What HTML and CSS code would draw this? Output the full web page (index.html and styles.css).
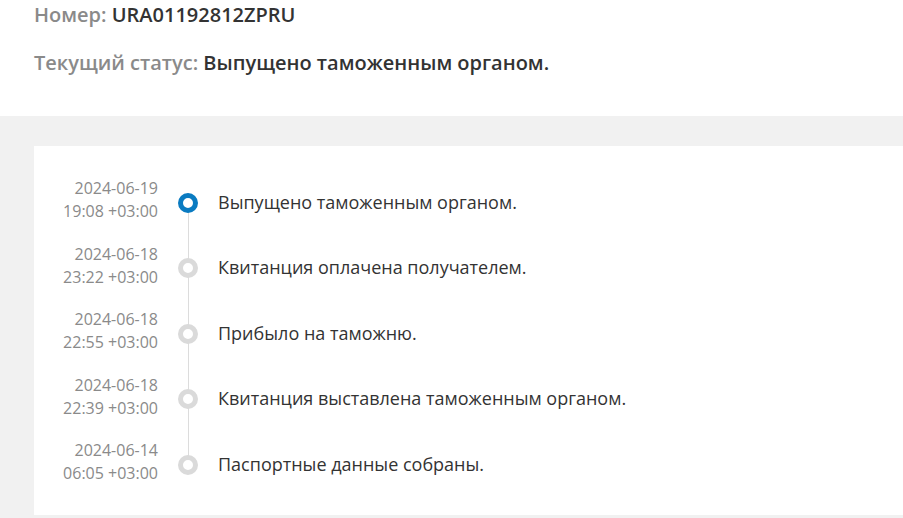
FILE: index.html
```
<!DOCTYPE html>
<html lang="ru">
<head>
  <meta charset="UTF-8">
  <meta name="viewport" content="width=device-width, initial-scale=1.0">
  <title>Статус отправления</title>
  <link rel="stylesheet" href="styles.css">
</head>
<body>
  <div id="info">
    <p><span class="label">Номер:</span> URA01192812ZPRU</p>
    <p><span class="label">Текущий статус:</span> Выпущено таможенным органом.</p>
  </div>
  <div id="history">
    <div class="card">
      <div class="row current">
        <div class="date">2024-06-19<br>19:08 +03:00</div>
        <div class="marker"><span class="dot"></span></div>
        <div class="event">Выпущено таможенным органом.</div>
      </div>
      <div class="row">
        <div class="date">2024-06-18<br>23:22 +03:00</div>
        <div class="marker"><span class="dot"></span></div>
        <div class="event">Квитанция оплачена получателем.</div>
      </div>
      <div class="row">
        <div class="date">2024-06-18<br>22:55 +03:00</div>
        <div class="marker"><span class="dot"></span></div>
        <div class="event">Прибыло на таможню.</div>
      </div>
      <div class="row">
        <div class="date">2024-06-18<br>22:39 +03:00</div>
        <div class="marker"><span class="dot"></span></div>
        <div class="event">Квитанция выставлена таможенным органом.</div>
      </div>
      <div class="row">
        <div class="date">2024-06-14<br>06:05 +03:00</div>
        <div class="marker"><span class="dot"></span></div>
        <div class="event">Паспортные данные собраны.</div>
      </div>
    </div>
  </div>
</body>
</html>
```

FILE: styles.css
```
body {
  font-family: 'Open Sans', sans-serif;
  margin: 0;
  padding: 0;
  background-color: #fff;
  color: #333;
}

#info {
  padding: 2px 34px 40px;
  font-size: 20px;
  font-weight: 600;
  line-height: 26px;
}

#info p {
  margin: 0;
}

#info p + p {
  margin-top: 22px;
}

.label {
  color: #8a8a8a;
}

#history {
  background-color: #f1f1f1;
  padding: 30px 0 3px 34px;
}

.card {
  background-color: #fff;
  padding: 24px 0 17px;
}

.row {
  display: flex;
  align-items: center;
  height: 65.5px;
}

.date {
  width: 124px;
  text-align: right;
  font-size: 16px;
  line-height: 23px;
  color: #8a8a8a;
  margin-top: -5px;
}

.marker {
  position: relative;
  width: 60px;
  height: 100%;
  display: flex;
  align-items: center;
  justify-content: center;
}

/* connecting line between dots */
.marker::before {
  content: "";
  position: absolute;
  left: 29.5px;
  top: 0;
  bottom: 0;
  width: 1px;
  background-color: #dcdcdc;
}

.row:first-child .marker::before {
  top: 50%;
}

.row:last-child .marker::before {
  bottom: 50%;
}

.dot {
  position: relative;
  width: 10px;
  height: 10px;
  border: 5px solid #dadada;
  border-radius: 50%;
  background-color: #fff;
}

.current .dot {
  border-color: #0a7bc1;
}

.event {
  font-size: 18px;
  color: #333;
  margin-top: -2px;
}
```
